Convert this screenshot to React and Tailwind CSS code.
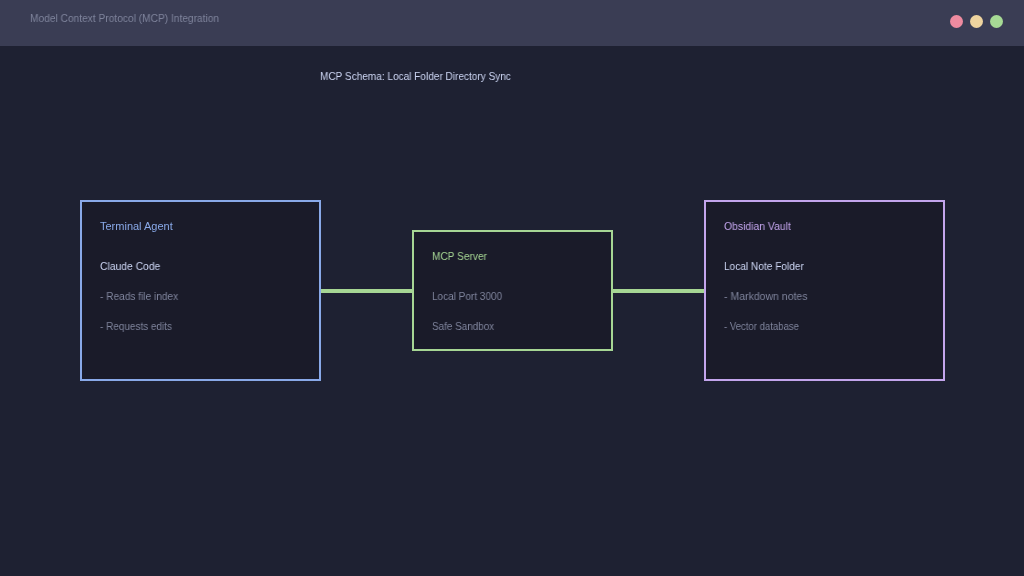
const boxes = {
  agent: {
    title: "Terminal Agent",
    titleFit: "scale-x-100",
    name: "Claude Code",
    nameFit: "scale-x-[0.94]",
    lines: [
      ["- Reads file index", "scale-x-[0.92]"],
      ["- Requests edits", "scale-x-[0.905]"],
    ],
    border: "border-[#89a9e8]",
    color: "text-[#89a9e8]",
    size: "w-[241px] h-[181px]",
  },
  server: {
    title: "MCP Server",
    titleFit: "scale-x-[0.92]",
    lines: [
      ["Local Port 3000", "scale-x-[0.91]"],
      ["Safe Sandbox", "scale-x-[0.9]"],
    ],
    border: "border-[#a6d694]",
    color: "text-[#a6d694]",
    size: "w-[201px] h-[121px]",
  },
  vault: {
    title: "Obsidian Vault",
    titleFit: "scale-x-[0.945]",
    name: "Local Note Folder",
    nameFit: "scale-x-[0.92]",
    lines: [
      ["- Markdown notes", "scale-x-[0.955]"],
      ["- Vector database", "scale-x-[0.87]"],
    ],
    border: "border-[#c3a5ec]",
    color: "text-[#c3a5ec]",
    size: "w-[241px] h-[181px]",
  },
};

function Box({ box }) {
  return (
    <div className={`${box.size} ${box.border} shrink-0 border-2 bg-[#1a1b29] pt-[9px] pl-[18px]`}>
      <div className={`${box.color} ${box.titleFit} h-[30px] origin-left leading-[30px] [will-change:transform]`}>{box.title}</div>
      <div className="h-[10px]" />
      {box.name ? (
        <div className={`${box.nameFit} h-[30px] origin-left leading-[30px] text-[#cdd6f4] [will-change:transform]`}>{box.name}</div>
      ) : null}
      {box.lines.map(([text, fit]) => (
        <div key={text} className={`${fit} h-[30px] origin-left leading-[30px] text-[#7f849c] [will-change:transform]`}>{text}</div>
      ))}
    </div>
  );
}

function Connector() {
  return <div className="h-[4px] w-[91px] shrink-0 bg-[#a6d694]" />;
}

export default function App() {
  return (
    <div className="h-[576px] w-[1024px] overflow-hidden bg-[#1e2132] font-['Liberation_Sans',sans-serif] text-[11px]">
      <header className="flex h-[46px] items-center justify-between bg-[#3a3d54] pr-[21px] pl-[30px]">
        <span className="-mt-[9px] origin-left scale-x-[0.926] text-[#7f849c] [will-change:transform]">Model Context Protocol (MCP) Integration</span>
        <div className="-mt-[4px] flex gap-[7px]">
          <span className="h-[13px] w-[13px] rounded-full bg-[#ee8ba0]" />
          <span className="h-[13px] w-[13px] rounded-full bg-[#eed49f]" />
          <span className="h-[13px] w-[13px] rounded-full bg-[#a6da95]" />
        </div>
      </header>
      <div className="pl-[320px]">
        <h1 className="mt-[15px] h-[30px] origin-left scale-x-[0.914] text-[11px] leading-[30px] font-normal text-[#cdd6f4] [will-change:transform]">
          MCP Schema: Local Folder Directory Sync
        </h1>
      </div>
      <div className="mt-[109px] flex items-center pl-[80px]">
        <Box box={boxes.agent} />
        <Connector />
        <Box box={boxes.server} />
        <Connector />
        <Box box={boxes.vault} />
      </div>
    </div>
  );
}
